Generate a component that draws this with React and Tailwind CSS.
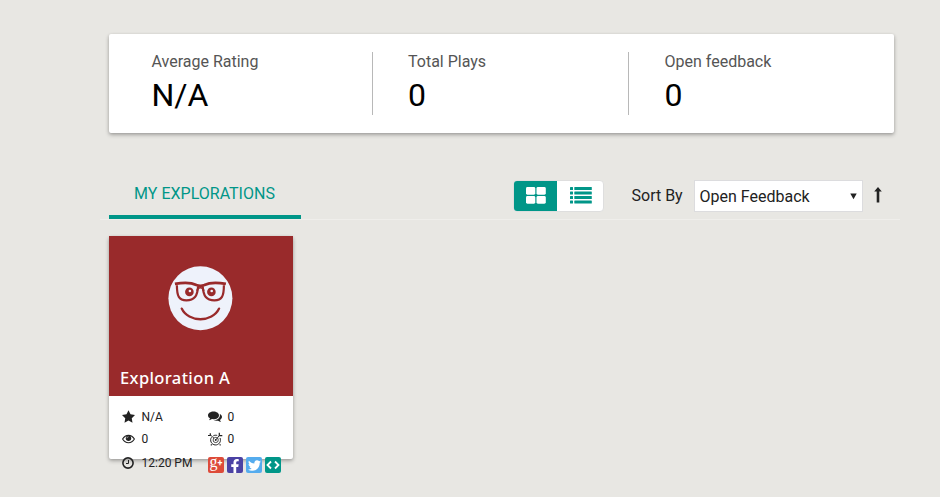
import React from 'react';
import { FaFacebookF, FaTwitter } from 'react-icons/fa';

const stats = [
  { label: 'Average Rating', value: 'N/A', box: 'w-[264px] pl-[42.5px] border-r' },
  { label: 'Total Plays', value: '0', box: 'w-[256px] pl-[35px] border-r' },
  { label: 'Open feedback', value: '0', box: 'flex-1 pl-[35.5px]' },
];

function GridIcon() {
  return (
    <svg width="20" height="17" viewBox="0 0 20 17" fill="white">
      <rect width="9.3" height="7.7" rx="1.4" />
      <rect x="10.5" width="9.3" height="7.7" rx="1.4" />
      <rect y="9" width="9.3" height="7.7" rx="1.4" />
      <rect x="10.5" y="9" width="9.3" height="7.7" rx="1.4" />
    </svg>
  );
}

function ListIcon() {
  return (
    <svg width="22" height="17" viewBox="0 0 22 17" fill="#009688">
      {[0, 4.5, 9, 13.5].map((y) => (
        <g key={y}>
          <rect y={y} width="3" height="3.1" rx=".5" />
          <rect x="4.3" y={y} width="17.5" height="3.1" rx=".5" />
        </g>
      ))}
    </svg>
  );
}

function Smiley() {
  return (
    <svg width="65" height="65" viewBox="-0.4 -0.3 65 65" fill="none">
      <circle cx="32" cy="32" r="32" fill="#eef2fb" />
      <g stroke="#992a2b">
        <path d="M8.500 19C8.500 30 10.500 34 18 34 26 34 29 30 29.700 20M55.500 19C55.500 30 53.500 34 46 34 38 34 35 30 34.300 20" strokeWidth="2.200" />
        <path d="M6.500 17.600C14 16.200 23 16.200 28 18.700 30.500 19.700 33.500 19.700 36 18.700 41 16.200 50 16.200 57.500 17.600" strokeWidth="2.700" />
        <path d="M28.500 24.500C29.300 20.500 34.700 20.500 35.500 24.500" strokeWidth="1.600" />
        <path d="M13.300 42.300C20 56.500 44 56.500 50.700 42.300" strokeWidth="2.300" strokeLinecap="round" />
      </g>
      <g fill="#992a2b">
        <circle cx="21" cy="25.600" r="4.300" />
        <circle cx="43" cy="25.600" r="4.300" />
      </g>
      <g fill="#eef2fb">
        <circle cx="21.500" cy="24.700" r="1.300" />
        <circle cx="43.300" cy="24.700" r="1.300" />
      </g>
    </svg>
  );
}

function StarIcon() {
  return (
    <svg className="-mt-px" width="13" height="13" viewBox="0 0 26 25" fill="#222">
      <path d="m13 0 4 8.200 9 1.300-6.500 6.300L21 24.800l-8-4.300-8 4.300 1.500-9L0 9.500l9-1.300Z" />
    </svg>
  );
}

function CommentsIcon() {
  return (
    <svg width="14" height="12" viewBox="0 0 14 12" fill="#222">
      <path d="M5.500.5C8.500.5 11 2.200 11 4.400S8.500 8.200 5.500 8.200L4 8.100C3 8.900 2 9.200.9 9.300c.6-.6 1-1.200 1.100-2C.8 6.600 0 5.600 0 4.400 0 2.200 2.500.5 5.500.5Z" />
      <path d="M11.800 3c1.300.7 2.200 1.800 2.200 3 0 1.100-.8 2.200-2 2.900.1.800.5 1.400 1.100 2-1.200-.1-2.200-.5-3.100-1.200-1.500.3-3.200 0-4.300-.6 4 0 6.900-2.300 6.100-6.100Z" />
    </svg>
  );
}

function EyeIcon() {
  return (
    <svg width="13" height="10" viewBox="0 0 13 10" fill="none" stroke="#222">
      <path d="M.6 5C3.500.1 9.500.1 12.400 5 9.500 9.900 3.500 9.900.6 5Z" strokeWidth="1.100" />
      <circle cx="6.500" cy="4.300" r="2.700" fill="#222" stroke="none" />
      <path d="M5 4.200c0-.9.600-1.500 1.500-1.500" stroke="white" strokeWidth=".6" />
    </svg>
  );
}

function ClockIcon() {
  return (
    <svg width="12" height="12" viewBox="0 0 12 12" fill="none" stroke="#222">
      <circle cx="6" cy="6" r="5.100" strokeWidth="1.600" />
      <path d="M6.500 3v3.500H4" strokeWidth="1" />
    </svg>
  );
}

function TargetIcon() {
  return (
    <svg width="15" height="14" viewBox="0 0 15 14" fill="none" stroke="#222">
      <path d="M3.500 5.300A4.900 4.900 0 1 0 12 6M5.300 3.800C6.300 3.200 8 3 9.200 3.500" strokeWidth="1" />
      <circle cx="7.700" cy="8" r="2.600" strokeWidth=".8" />
      <circle cx="7.700" cy="8" r=".9" fill="#222" stroke="none" />
      <path d="m7.700 8 3.800-4.700M2.500 3l3.500 3.200" strokeWidth=".9" />
      <path d="M11.300.7v3h3M2.300 1.200v2.300H0M3.700 12.300l-.8 1M11.700 12.300l.8 1" strokeWidth="1.200" />
    </svg>
  );
}

function Metric({ icon, children }) {
  return (
    <div className="flex h-[22px] items-center">
      <span className="flex w-[19.5px] items-center">{icon}</span>
      <span>{children}</span>
    </div>
  );
}

export default function App() {
  return (
    <div className="h-[497px] w-[940px] overflow-hidden bg-[#e8e7e3] pt-[34px] font-['Roboto',sans-serif] text-[#222]">
      <section className="ml-[109px] flex h-[99px] w-[785px] rounded-[2px] bg-white pt-[18px] shadow-[0_1px_3px_rgba(0,0,0,0.14),0_2px_4px_rgba(0,0,0,0.24)]">
        {stats.map((s) => (
          <div key={s.label} className={`h-[63px] border-[#b8b8b8] ${s.box}`}>
            <div className="text-base leading-[19px] text-[#555]">{s.label}</div>
            <div className="mt-[5px] text-[32px] leading-[38px] text-black">{s.value}</div>
          </div>
        ))}
      </section>

      <div className="mt-[35px] ml-[100px] flex h-[52px] w-[800px] border-b border-[#efeeeb] pl-[9px]">
        <div className="-mb-px flex h-[51px] w-[192px] justify-center border-b-4 border-[#009688] pt-3.5 pr-px text-base leading-6 text-[#009688]">
          <span className="whitespace-nowrap">MY EXPLORATIONS</span>
        </div>
        <div className="mt-3 ml-[212px] flex h-8 w-[91px] overflow-hidden rounded border border-[#dedede] bg-white">
          <button className="flex w-[43px] items-center justify-center bg-[#009688] pb-px"><GridIcon /></button>
          <button className="flex flex-1 items-center justify-center pb-px pl-0.5"><ListIcon /></button>
        </div>
        <span className="mt-4 ml-[27.5px] w-[62.5px] text-base leading-6">Sort By</span>
        <div className="mt-3 flex h-8 w-[169px] items-center justify-between border border-[#dcdcde] bg-white pt-px pr-[5px] pl-[4.5px] text-base">
          <span>Open Feedback</span>
          <svg className="-mt-px" width="7" height="7" viewBox="0 0 7 7"><path d="M.3.500h6.400L3.500 6.200Z" fill="#222" /></svg>
        </div>
        <svg className="mt-[19px] ml-[11px]" width="8" height="17" viewBox="0 0 8 17">
          <path d="M4 0 7.800 4.400H5.300V15.600H2.700V4.400H.2Z" fill="#222" />
        </svg>
      </div>

      <article className="mt-4 ml-[109px] h-[223px] w-[184px] rounded-[2px] bg-white shadow-[0_1px_3px_rgba(0,0,0,0.14),0_2px_4px_rgba(0,0,0,0.24)]">
        <div className="flex h-40 flex-col bg-[#992a2b] pt-[30px]">
          <div className="pl-[59px]"><Smiley /></div>
          <h2 className="mt-[35px] pl-[11px] font-['Noto_Sans',sans-serif] text-[16.500px] leading-6 font-medium tracking-[0.38px] text-white">Exploration A</h2>
        </div>
        <div className="flex pt-[10px] pl-[13px] text-xs">
          <div className="w-[86px]">
            <Metric icon={<StarIcon />}>N/A</Metric>
            <Metric icon={<EyeIcon />}>0</Metric>
            <div className="mt-0.5"><Metric icon={<ClockIcon />}><span className="whitespace-nowrap">12:20 PM</span></Metric></div>
          </div>
          <div>
            <Metric icon={<CommentsIcon />}>0</Metric>
            <Metric icon={<TargetIcon />}>0</Metric>
            <div className="mt-[7px] flex gap-[3px] text-white">
              <span className="flex size-4 items-center justify-center rounded-[2px] bg-[#dd4b39] font-['Liberation_Serif',serif] text-[16px] leading-3">
                <span className="-mt-1.5">g</span><span className="-mt-1 font-['Roboto',sans-serif] text-[9px] font-bold">+</span>
              </span>
              <span className="flex size-4 items-end justify-end rounded-[2px] bg-[#4b42a4] pr-px"><FaFacebookF size={14} /></span>
              <span className="flex size-4 items-center justify-center rounded-[2px] bg-[#55acee]"><FaTwitter size={13} /></span>
              <span className="flex size-4 items-center justify-center rounded-[2px] bg-[#009688]">
                <svg width="14" height="10" viewBox="0 0 14 10" fill="none" stroke="white" strokeWidth="1.800"><path d="M5 1.500 1.500 5 5 8.500M9 1.500 12.500 5 9 8.500" /></svg>
              </span>
            </div>
          </div>
        </div>
      </article>
    </div>
  );
}
